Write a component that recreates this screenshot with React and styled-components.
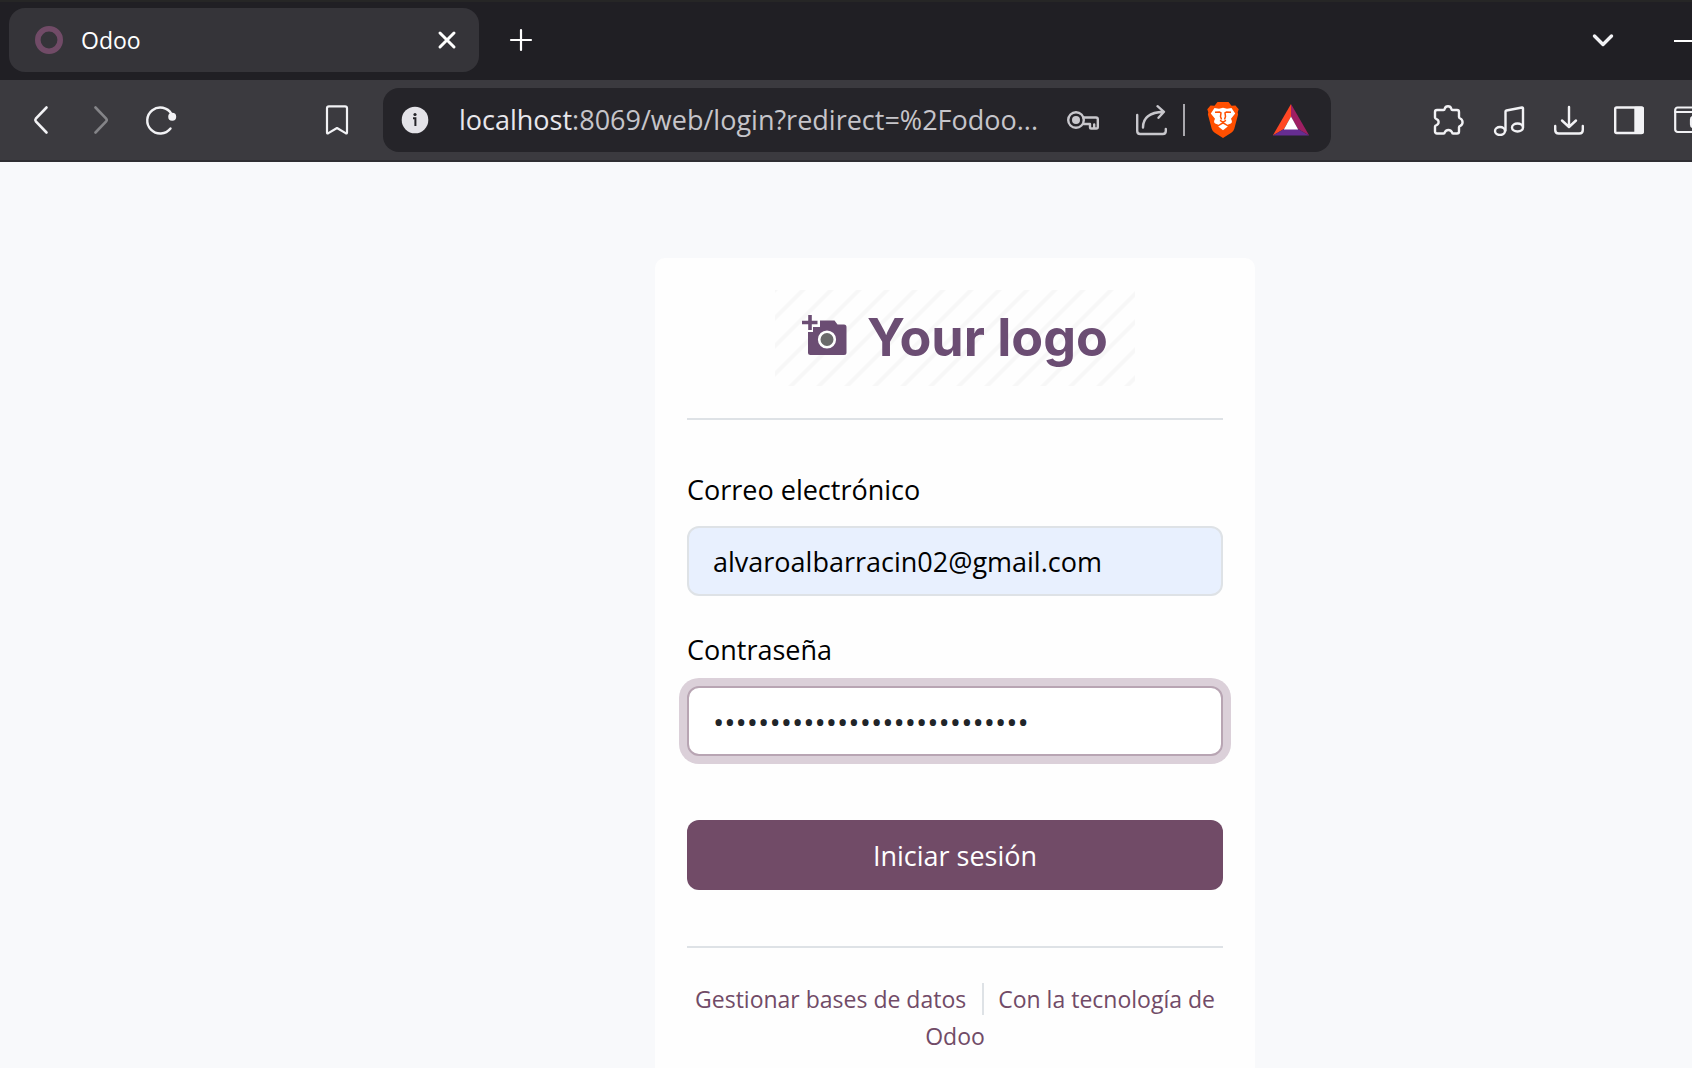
import React from "react";
import styled, { createGlobalStyle } from "styled-components";

const GlobalStyle = createGlobalStyle`
  *, *::before, *::after { box-sizing: border-box; }
  body {
    margin: 0;
    font-family: "Open Sans", "Noto Sans", sans-serif;
    background: #f8f9fb;
  }
  button, input { font: inherit; }
`;

const Window = styled.div`
  display: flex;
  flex-direction: column;
  height: 100vh;
  overflow: hidden;
`;

/* ---------- browser chrome ---------- */

const TabStrip = styled.header`
  display: flex;
  align-items: center;
  flex: none;
  height: 80px;
  padding-left: 9px;
  background: #201f24;
  box-shadow: inset 0 2px 0 #262626;
  overflow: hidden;
`;

const Tab = styled.div`
  display: flex;
  align-items: center;
  width: 470px;
  height: 64px;
  padding: 0 0 0 24px;
  border-radius: 16px;
  background: #353439;
  color: #fff;
`;

const TabTitle = styled.span`
  flex: 1;
  margin-left: 16px;
  font-size: 23px;
  line-height: 32px;
`;

const IconButton = styled.button`
  display: flex;
  align-items: center;
  justify-content: center;
  flex: none;
  width: ${(p) => p.$width || 60}px;
  height: 64px;
  padding: 0;
  border: 0;
  background: none;
  color: ${(p) => p.$color || "#f2f2f5"};
  opacity: ${(p) => (p.disabled ? 0.4 : 1)};
`;

const WindowControls = styled.div`
  display: flex;
  margin-left: auto;
  margin-right: -22px;
  gap: 21px;
`;

const Toolbar = styled.nav`
  display: flex;
  align-items: center;
  flex: none;
  height: 82px;
  padding-left: 11px;
  background: #3b3a3f;
  border-bottom: 2px solid #2f2e33;
  overflow: hidden;
`;

const NavButtons = styled.div`
  display: flex;
  margin-right: 116px;
`;

const AddressBar = styled.div`
  display: flex;
  align-items: center;
  flex: 1;
  min-width: 0;
  height: 64px;
  margin: 0 88px 0 16px;
  padding-right: 8px;
  border-radius: 16px;
  background: #252429;
`;

const Address = styled.span`
  flex: 1;
  min-width: 0;
  padding-left: 12px;
  font-size: 27px;
  line-height: 40px;
  white-space: nowrap;
  color: #c6c5ca;
`;

const Host = styled.span`
  color: #e8e7ec;
`;

const AddressActions = styled.div`
  display: flex;
  gap: 4px;
`;

const Divider = styled.span`
  width: 2px;
  height: 32px;
  margin-right: 6px;
  background: #a9a8ad;
`;

const Extensions = styled.div`
  display: flex;
  flex: none;
  margin-right: -27px;
`;

/* ---------- login page ---------- */

const Page = styled.main`
  display: flex;
  justify-content: center;
  align-items: flex-start;
  flex: 1;
  min-height: 0;
  padding: 96px 0 0 218px;
  background: #f8f9fb;
`;

const Card = styled.section`
  width: 600px;
  padding: 32px;
  border-radius: 10px;
  background: #fefefe;
`;

const LogoArea = styled.div`
  display: flex;
  justify-content: center;
  padding-bottom: 32px;
  border-bottom: 2px solid #dee2e6;
`;

const Logo = styled.div`
  display: flex;
  align-items: center;
  justify-content: center;
  gap: 20px;
  width: 360px;
  height: 96px;
  padding-bottom: 6px;
  color: #6b4d73;
  background: linear-gradient(
      135deg,
      #f7f7f7 3%,
      #fefefe 7%,
      #fefefe 43%,
      #f7f7f7 47%,
      #f7f7f7 53%,
      #fefefe 57%,
      #fefefe 93%,
      #f7f7f7 97%
    )
    0 0 / 28px 28px;
`;

const LogoText = styled.span`
  padding-top: 6px;
  font-family: Inter, sans-serif;
  font-size: 52px;
  font-weight: 700;
  line-height: 64px;
`;

const Form = styled.form`
  display: flex;
  flex-direction: column;
  padding: 48px 0 56px;
  border-bottom: 2px solid #dee2e6;
`;

const Field = styled.div`
  display: flex;
  flex-direction: column;
  gap: 14px;
  margin-bottom: ${(p) => (p.$last ? 64 : 32)}px;
`;

const Label = styled.label`
  font-size: 27px;
  line-height: 44px;
  color: #000;
`;

const Input = styled.input`
  width: 100%;
  height: 70px;
  padding: 0 24px;
  border: 2px solid ${(p) => (p.$focused ? "#b8a5b3" : "#dee2e6")};
  border-radius: 12px;
  outline: none;
  font-size: ${(p) => (p.type === "password" ? 30 : 27)}px;
  background: ${(p) => (p.$autofilled ? "#e8f0fe" : "#fff")};
  color: ${(p) => (p.$autofilled ? "#000" : "#212529")};
  box-shadow: ${(p) => (p.$focused ? "0 0 0 8px #dbd0d9" : "none")};
`;

const Submit = styled.button`
  height: 70px;
  padding: 2px 0 0;
  border: 0;
  border-radius: 12px;
  background: #714b67;
  color: #fff;
  font-size: 27px;
  line-height: 44px;
`;

const Links = styled.footer`
  padding-top: 33px;
  text-align: center;
  font-size: 23px;
  line-height: 37px;
`;

const FooterLink = styled.a`
  color: #714b67;
  text-decoration: none;
  & + & {
    margin-left: 16px;
    padding-left: 14px;
    border-left: 2px solid #dee2e6;
  }
`;

/* ---------- drawings ---------- */

const Stroke = ({ children, size = 32, width = 2.2 }) => (
  <svg
    width={size}
    height={size}
    viewBox={`0 0 ${size} ${size}`}
    fill="none"
    stroke="currentColor"
    strokeWidth={width}
    strokeLinecap="round"
    strokeLinejoin="round"
    aria-hidden="true"
  >
    {children}
  </svg>
);

const Favicon = () => (
  <svg width="32" height="32" viewBox="0 0 32 32" aria-hidden="true">
    <circle cx="16" cy="16" r="11.2" fill="none" stroke="#714b67" strokeWidth="5.6" />
  </svg>
);

const InfoIcon = () => (
  <svg width="32" height="32" viewBox="0 0 32 32" aria-hidden="true">
    <circle cx="16" cy="16" r="13.3" fill="#e4e3e8" />
    <circle cx="16" cy="10.5" r="1.6" fill="#252429" />
    <path d="M14 14.2h2.4V22" fill="none" stroke="#252429" strokeWidth="2" />
  </svg>
);

const LionIcon = () => (
  <svg width="32" height="36" viewBox="0 0 32 36" aria-hidden="true">
    <path
      fill="#ff4f00"
      d="M10.5 0h11l3 3.8 4-.4 3.2 3.8-1 3 .4 2.3-3.8 14.2q-.7 2.5-3 4L16 36l-8.3-5.3q-2.3-1.5-3-4L.9 12.5l.4-2.3-1-3 3.2-3.8 4 .4z"
    />
    <path
      fill="#fff"
      d="M7.5 6l4.5.8L16 5.8l4 1L24.5 6l3.7 5.4-4.2 5.4.9 2.2q.3 1.5-1 2.5l-3.4 1.2L16 19.8l-4.5 2.9-3.4-1.2q-1.3-1-1-2.5l.9-2.2-4.200-5.400z"
    />
    <path fill="#fff" d="M16 21.8l4.8 2.6L16 28.2l-4.8-3.8z" />
    <path
      fill="none"
      stroke="#ff4f00"
      strokeWidth="1.5"
      d="M8 10.3l4.5-.3 1.5.8-.5 3.7 1 3M24 10.3l-4.500-.3-1.500.8.5 3.700-1 3M13 18.300l3 1.800 3-1.800M16 20v2"
    />
  </svg>
);

const RewardsIcon = () => (
  <svg width="38" height="32" viewBox="0 0 38 32" aria-hidden="true">
    <path fill="#ff4724" d="M19 0v12.5L12 25 .8 31.5z" />
    <path fill="#9e1f63" d="M19 0v12.5L26 25l11.2 6.5z" />
    <path fill="#662d91" d="M.8 31.5L12 25h14l11.2 6.5z" />
    <path fill="#fff" d="M19 12.5L26.2 25.5H11.8z" />
  </svg>
);

const CameraIcon = () => (
  <svg width="45" height="42" viewBox="0 0 45 42" aria-hidden="true">
    <path
      fill="currentColor"
      d="M18 6.5h14.5l3 4H42q2.5 0 2.5 2.5v25.5q0 2.5-2.5 2.5H8.5Q6 41 6 38.5V18h5v-5h7z"
    />
    <path d="M8 1v15M0 8.5h15.5" stroke="currentColor" strokeWidth="3.6" fill="none" />
    <circle cx="25" cy="25.5" r="7.8" fill="#6a6a6a" stroke="#fefefe" strokeWidth="2.6" />
  </svg>
);

export default function App() {
  return (
    <>
      <GlobalStyle />
      <Window>
        <TabStrip>
          <Tab>
            <Favicon />
            <TabTitle>Odoo</TabTitle>
            <IconButton $width={64} $color="#fff" aria-label="Cerrar pestaña">
              <Stroke width={3}>
                <path d="M9 9l14 14M23 9L9 23" />
              </Stroke>
            </IconButton>
          </Tab>
          <IconButton $width={84} $color="#fff" aria-label="Nueva pestaña">
            <Stroke>
              <path d="M16 6v20M6 16h20" />
            </Stroke>
          </IconButton>
          <WindowControls>
            <IconButton aria-label="Buscar pestañas">
              <Stroke width={3.4}>
                <path d="M7.5 12l8.5 8.5L24.5 12" />
              </Stroke>
            </IconButton>
            <IconButton $color="#fff" aria-label="Minimizar">
              <Stroke width={2}>
                <path d="M6 17h20" strokeLinecap="butt" />
              </Stroke>
            </IconButton>
          </WindowControls>
        </TabStrip>

        <Toolbar>
          <NavButtons>
            <IconButton aria-label="Atrás">
              <Stroke width={2.6}>
                <path d="M21.5 3.5L10.8 14.7q-1 1.3 0 2.6L21.5 28.5" />
              </Stroke>
            </IconButton>
            <IconButton aria-label="Adelante" disabled>
              <Stroke width={2.6}>
                <path d="M10.5 3.5l10.7 11.2q1 1.3 0 2.6L10.5 28.5" />
              </Stroke>
            </IconButton>
            <IconButton aria-label="Recargar">
              <Stroke width={2.4}>
                <path d="M25.5 24.5A13 13 0 1 1 26.5 10" />
                <circle cx="27.2" cy="12.8" r="4" fill="currentColor" stroke="none" />
              </Stroke>
            </IconButton>
          </NavButtons>
          <IconButton aria-label="Añadir marcador">
            <Stroke width={2.2}>
              <path d="M8 2.3h16q2 0 2 2V28.5q0 1.6-1.4.6L16 24l-8.6 5.1Q6 30.1 6 28.5V4.3q0-2 2-2z" />
            </Stroke>
          </IconButton>

          <AddressBar>
            <IconButton $width={64} aria-label="Información del sitio">
              <InfoIcon />
            </IconButton>
            <Address>
              <Host>localhost</Host>:8069/web/login?redirect=%2Fodoo...
            </Address>
            <AddressActions>
              <IconButton $width={64} $color="#c8c7cc" aria-label="Contraseñas">
                <Stroke width={2.4}>
                  <circle cx="9" cy="16" r="7.8" />
                  <circle cx="9" cy="16" r="4" fill="currentColor" stroke="none" />
                  <path d="M16.5 13.5H29q1.800 0 1.800 1.800V23q0 1.500-1.500 1.500H24q-1 0-1-1V20h-6.500M27.200 24v-3.500" />
                </Stroke>
              </IconButton>
              <IconButton $width={64} $color="#c8c7cc" aria-label="Compartir">
                <Stroke width={2.4}>
                  <path d="M2.2 11v16q0 3 3 3h22.600q3 0 3-3v-2M8 23.500C8 14 15 8.300 28.500 7.800M22.500 2.200l6.500 5.600-5.500 6" />
                </Stroke>
              </IconButton>
            </AddressActions>
            <Divider />
            <AddressActions>
              <IconButton $width={64} aria-label="Brave Shields">
                <LionIcon />
              </IconButton>
              <IconButton $width={64} aria-label="Brave Rewards">
                <RewardsIcon />
              </IconButton>
            </AddressActions>
          </AddressBar>

          <Extensions>
            <IconButton aria-label="Extensiones">
              <Stroke width={2.4}>
                <path d="M4 6h6.500q1 0 1.200-1.200a3.400 3.400 0 0 1 6.600 0Q18.500 6 19.500 6H24q2 0 2 2v5q0 1 1.200 1.500a4 4 0 0 1 0 7.300Q26 22.300 26 23.300V27.500q0 2-2 2h-4q-.8 0-1-1.200a4 4 0 0 0-7.200 0q-.2 1.200-1.200 1.200H4q-2 0-2-2v-5q0-1 1.500-1.400a3.200 3.200 0 0 0 0-6Q2 14.500 2 13.500V8q0-2 2-2z" />
              </Stroke>
            </IconButton>
            <IconButton aria-label="Multimedia">
              <Stroke width={2.4}>
                <ellipse cx="7" cy="27" rx="5" ry="4" />
                <ellipse cx="24.5" cy="23.5" rx="5.5" ry="4" />
                <path d="M12.5 26.5V7.500q0-.8 1-1L29 3.500q1-.2 1 .8V23" />
              </Stroke>
            </IconButton>
            <IconButton aria-label="Descargas">
              <Stroke width={2.4}>
                <path d="M16 3v19M9 16.500l7 6.500 7-6.500M2.200 22v4q0 3.500 3.500 3.500h20.600q3.500 0 3.500-3.500v-4" />
              </Stroke>
            </IconButton>
            <IconButton aria-label="Barra lateral">
              <Stroke width={2.4}>
                <rect x="2.2" y="3.5" width="27.6" height="25.5" rx="1.5" />
                <rect x="22.5" y="4" width="7" height="24.5" fill="currentColor" />
              </Stroke>
            </IconButton>
            <IconButton aria-label="Cartera">
              <Stroke width={2.2}>
                <rect x="2.2" y="3.5" width="28" height="24.5" rx="2.5" />
                <path d="M2.2 8h28M30 13H20.500q-2.500 0-2.500 2.500v5q0 2.500 2.500 2.500H30" />
              </Stroke>
            </IconButton>
          </Extensions>
        </Toolbar>

        <Page>
          <Card>
            <LogoArea>
              <Logo>
                <CameraIcon />
                <LogoText>Your logo</LogoText>
              </Logo>
            </LogoArea>
            <Form onSubmit={(e) => e.preventDefault()}>
              <Field>
                <Label htmlFor="login">Correo electrónico</Label>
                <Input id="login" type="text" $autofilled defaultValue="alvaroalbarracin02@gmail.com" />
              </Field>
              <Field $last>
                <Label htmlFor="password">Contraseña</Label>
                <Input id="password" type="password" $focused defaultValue="contraseña-de-acceso-local-1" />
              </Field>
              <Submit type="submit">Iniciar sesión</Submit>
            </Form>
            <Links>
              <FooterLink href="#databases">Gestionar bases de datos</FooterLink>
              <FooterLink href="#odoo">Con la tecnología de Odoo</FooterLink>
            </Links>
          </Card>
        </Page>
      </Window>
    </>
  );
}
